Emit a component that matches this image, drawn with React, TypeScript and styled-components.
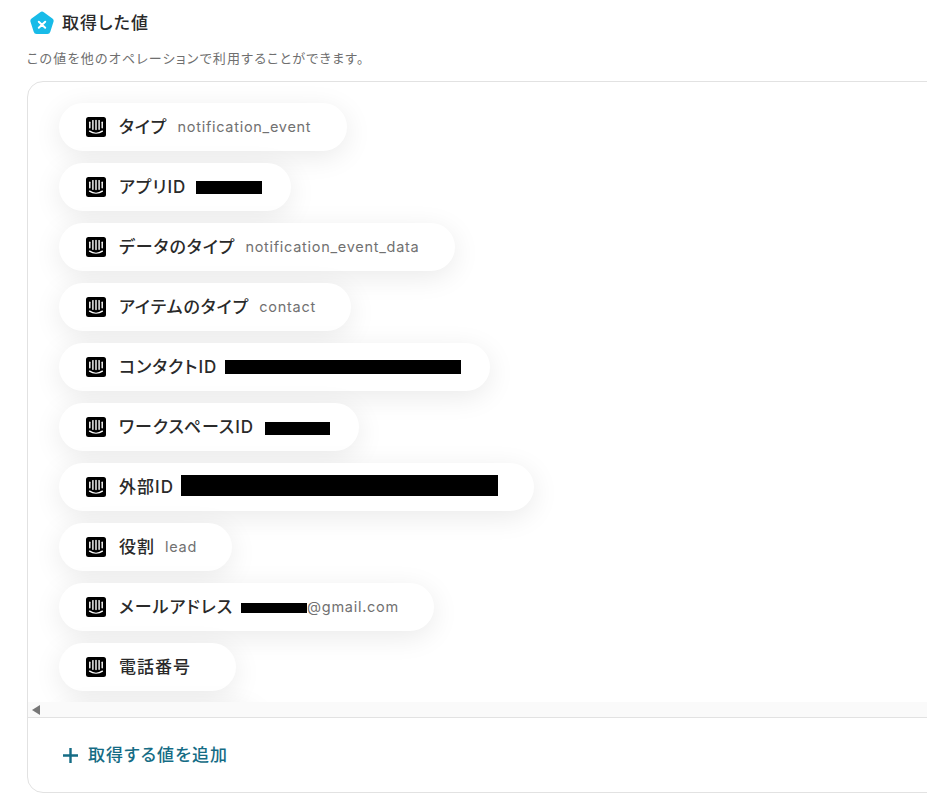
import React from "react";
import styled, { createGlobalStyle } from "styled-components";

const Global = createGlobalStyle`
  html, body { margin: 0; padding: 0; background: #fff; width: 927px; height: 798px; overflow: hidden; }
  * { box-sizing: border-box; }
  body { font-family: Inter, "Noto Sans CJK JP", sans-serif; font-feature-settings: "palt"; }
`;

const Page = styled.div`
  width: 927px;
  height: 798px;
  overflow: hidden;
  padding: 11px 0 0 27px;
`;

const Heading = styled.div`
  display: flex;
  align-items: center;
  gap: 7px;
  height: 25px;
  padding-left: 2px;
`;

const HeadingText = styled.h2`
  margin: 0;
  font-size: 17px;
  line-height: 25px;
  font-weight: 500;
  letter-spacing: 1.1px;
  color: #2a2a2a;
`;

const Description = styled.p`
  margin: 12px 0 0;
  font-size: 13px;
  line-height: 20px;
  letter-spacing: 1.22px;
  color: #6f6f6f;
`;

const Card = styled.section`
  width: 1000px;
  height: 712px;
  margin-top: 13px;
  border: 1px solid #e2e2e2;
  border-radius: 16px;
  display: flex;
  flex-direction: column;
  overflow: hidden;
`;

const List = styled.div`
  height: 620px;
  padding: 21px 0 0 31px;
  display: flex;
  flex-direction: column;
  align-items: flex-start;
  gap: 12px;
  overflow: hidden;
`;

const Pill = styled.div<{ $width: number }>`
  flex: none;
  width: ${(p) => p.$width}px;
  height: 48px;
  padding-left: 27px;
  display: flex;
  align-items: center;
  background: #fff;
  border-radius: 24px;
  box-shadow: 0 6px 28px rgba(0, 0, 0, 0.085);
`;

const Label = styled.span`
  margin-left: 13px;
  font-size: 17px;
  font-weight: 500;
  line-height: 24px;
  letter-spacing: 1px;
  color: #2a2a2a;
  white-space: nowrap;
`;

const Value = styled.span`
  margin-left: 10px;
  font-size: 14.5px;
  line-height: 24px;
  letter-spacing: 0.72px;
  color: #717171;
  white-space: nowrap;
  display: inline-flex;
  align-items: center;
`;

const EmailValue = styled(Value)`
  margin-left: 0;
`;

const Redacted = styled.span<{ $w: number; $h: number; $gap?: number; $shift?: number }>`
  display: inline-block;
  flex: none;
  width: ${(p) => p.$w}px;
  height: ${(p) => p.$h}px;
  margin-left: ${(p) => p.$gap ?? 11}px;
  margin-top: ${(p) => p.$shift ?? 0}px;
  background: #000;
`;

const ScrollBar = styled.div`
  flex: none;
  height: 15px;
  background: #fafafa;
  display: flex;
  align-items: center;
  padding-left: 4px;
`;

const ArrowLeft = styled.span`
  width: 0;
  height: 0;
  border-top: 5px solid transparent;
  border-bottom: 5px solid transparent;
  border-right: 8px solid #777;
`;

const Footer = styled.div`
  flex: 1;
  border-top: 1px solid #e2e2e2;
  display: flex;
  align-items: flex-start;
  gap: 9px;
  padding: 25px 0 0 34px;
`;

const AddText = styled.span`
  font-size: 17px;
  line-height: 24px;
  font-weight: 500;
  letter-spacing: 1.1px;
  color: #156c85;
  white-space: nowrap;
`;

const IconSlot = styled.span`
  display: flex;
  flex: none;
`;

const PlusSlot = styled(IconSlot)`
  margin-top: 4px;
`;

const AppIcon = () => (
  <IconSlot>
    <svg width="20" height="20" viewBox="0 0 20 20">
      <rect x="0" y="0" width="20" height="20" rx="2.5" fill="#000" />
      <g stroke="#fff" strokeWidth="1.4" strokeLinecap="round" fill="none">
        <path d="M3.8 5.2v5.6" />
        <path d="M6.9 3.6v8.6" />
        <path d="M10 3.4v9.2" />
        <path d="M13.1 3.6v8.6" />
        <path d="M16.2 5.2v5.6" />
        <path d="M3.6 14.2c3.8 2.6 9 2.6 12.8 0" />
      </g>
    </svg>
  </IconSlot>
);

const LogoIcon = () => (
  <IconSlot>
    <svg width="26" height="26" viewBox="0 0 26 26">
      <path
        d="M11.2 1.2a3 3 0 0 1 3.6 0l8.6 6.3a3 3 0 0 1 1.1 3.3l-3.2 10a3 3 0 0 1-2.9 2.2H7.6a3 3 0 0 1-2.9-2.2l-3.2-10a3 3 0 0 1 1.1-3.3z"
        fill="#18bbe8"
      />
      <path d="M9.8 10.7l6.4 6M16.2 10.7l-6.4 6" stroke="#fff" strokeWidth="2" strokeLinecap="round" />
    </svg>
  </IconSlot>
);

const PlusIcon = () => (
  <svg width="17" height="17" viewBox="0 0 17 17">
    <path d="M8.5 1v15M1 8.5h15" stroke="#156c85" strokeWidth="2.4" />
  </svg>
);

const rows: { label: string; width: number; value?: React.ReactNode }[] = [
  { label: "タイプ", width: 288, value: <Value>notification_event</Value> },
  { label: "アプリID", width: 232, value: <Redacted $w={66} $h={13} $gap={10} /> },
  { label: "データのタイプ", width: 396, value: <Value>notification_event_data</Value> },
  { label: "アイテムのタイプ", width: 292, value: <Value>contact</Value> },
  { label: "コンタクトID", width: 431, value: <Redacted $w={236} $h={14} $gap={8} /> },
  { label: "ワークスペースID", width: 300, value: <Redacted $w={65} $h={13} $gap={11} $shift={2} /> },
  { label: "外部ID", width: 475, value: <Redacted $w={317} $h={21} $gap={7} $shift={-3} /> },
  { label: "役割", width: 173, value: <Value>lead</Value> },
  {
    label: "メールアドレス",
    width: 375,
    value: (
      <>
        <Redacted $w={66} $h={10} $gap={8} $shift={2} />
        <EmailValue>@gmail.com</EmailValue>
      </>
    ),
  },
  { label: "電話番号", width: 177 },
  { label: "", width: 200 },
];

export default function App() {
  return (
    <Page>
      <Global />
      <Heading>
        <LogoIcon />
        <HeadingText>取得した値</HeadingText>
      </Heading>
      <Description>この値を他のオペレーションで利用することができます。</Description>
      <Card>
        <List>
          {rows.map((r, i) => (
            <Pill key={i} $width={r.width}>
              {r.label && <AppIcon />}
              {r.label && <Label>{r.label}</Label>}
              {r.value}
            </Pill>
          ))}
        </List>
        <ScrollBar>
          <ArrowLeft />
        </ScrollBar>
        <Footer>
          <PlusSlot>
            <PlusIcon />
          </PlusSlot>
          <AddText>取得する値を追加</AddText>
        </Footer>
      </Card>
    </Page>
  );
}
